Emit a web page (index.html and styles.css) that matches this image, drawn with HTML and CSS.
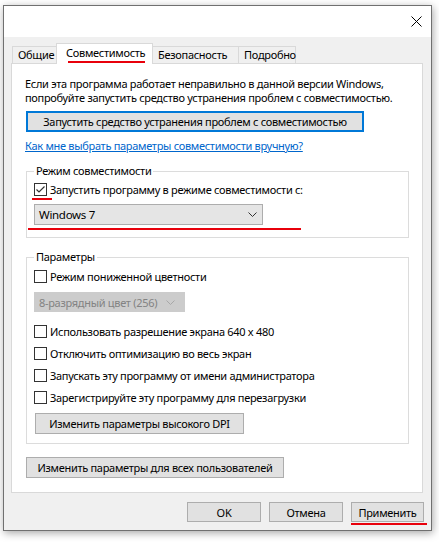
FILE: index.html
```html
<!DOCTYPE html>
<html lang="ru">
<head>
<meta charset="utf-8">
<link rel="stylesheet" href="styles.css">
</head>
<body>
<div class="window">
  <div class="titlebar">
    <svg class="close" width="11" height="11" viewBox="0 0 11 11"><path d="M0.5 0.5 L10.5 10.5 M10.5 0.5 L0.5 10.5" stroke="#000" stroke-width="1" fill="none"/></svg>
  </div>
  <div class="content">
    <div class="tabs">
      <div class="tab t1">Общие</div>
      <div class="tab active"><span class="mark">Совместимость</span></div>
      <div class="tab t3">Безопасность</div>
      <div class="tab t4">Подробно</div>
    </div>
    <div class="panel">
      <p class="intro">Если эта программа работает неправильно в данной версии Windows,<br>попробуйте запустить средство устранения проблем с совместимостью.</p>
      <div class="btn btn-default wide">Запустить средство устранения проблем с совместимостью</div>
      <a class="link">Как мне выбрать параметры совместимости вручную?</a>
      <fieldset class="group g1">
        <legend>Режим совместимости</legend>
        <label class="check"><span class="box checked mark-box"><svg width="11" height="11" viewBox="0 0 11 11"><path d="M1.5 5.5 L4 8 L9.5 2.5" stroke="#333" stroke-width="1.2" fill="none"/></svg></span>Запустить программу в режиме совместимости с:</label>
        <div class="combo mark-combo"><span>Windows 7</span><svg width="9" height="5" viewBox="0 0 9 5"><path d="M0.5 0.5 L4.5 4.5 L8.5 0.5" stroke="#333" stroke-width="1" fill="none"/></svg></div>
      </fieldset>
      <fieldset class="group g2">
        <legend>Параметры</legend>
        <label class="check"><span class="box"></span>Режим пониженной цветности</label>
        <div class="combo disabled"><span>8-разрядный цвет (256)</span><svg width="9" height="5" viewBox="0 0 9 5"><path d="M0.5 0.5 L4.5 4.5 L8.5 0.5" stroke="#a8a8a8" stroke-width="1" fill="none"/></svg></div>
        <div class="checks">
          <label class="check"><span class="box"></span>Использовать разрешение экрана 640 x 480</label>
          <label class="check"><span class="box"></span>Отключить оптимизацию во весь экран</label>
          <label class="check"><span class="box"></span>Запускать эту программу от имени администратора</label>
          <label class="check"><span class="box"></span>Зарегистрируйте эту программу для перезагрузки</label>
        </div>
        <div class="btn dpi">Изменить параметры высокого DPI</div>
      </fieldset>
      <div class="btn all">Изменить параметры для всех пользователей</div>
    </div>
    <div class="footer">
      <div class="btn foot">OK</div>
      <div class="btn foot">Отмена</div>
      <div class="btn foot mark-apply">Применить</div>
    </div>
  </div>
</div>
</body>
</html>
```

FILE: styles.css
```css
* { box-sizing: border-box; }
html, body { margin: 0; padding: 0; background: #fff; }
body {
  font-family: "Noto Sans", "Open Sans", sans-serif;
  font-size: 11px;
  letter-spacing: -0.3px;
  color: #000;
  width: 439px;
  height: 542px;
  overflow: hidden;
}
.window {
  margin: 5px 0 0 3px;
  width: 429px;
  height: 526px;
  border: 1px solid #707070;
  box-shadow: 1px 2px 8px rgba(0,0,0,0.35);
  display: flex;
  flex-direction: column;
}
.titlebar {
  height: 31px;
  background: #fff;
  display: flex;
  justify-content: flex-end;
  align-items: center;
  padding-right: 9px;
}
.close { display: block; }
.content {
  flex: 1;
  background: #f0f0f0;
  padding: 6px 8px 0 7px;
  display: flex;
  flex-direction: column;
}
.tabs {
  display: flex;
  align-items: flex-end;
  padding-left: 1px;
  height: 20px;
  position: relative;
  z-index: 2;
}
.tab {
  height: 17px;
  line-height: 16px;
  border: 1px solid #d9d9d9;
  border-bottom: none;
  background: #f0f0f0;
  padding: 0 5px;
  margin-right: -1px;
  white-space: nowrap;
}
.t1 { width: 46px; padding-left: 5px; }
.t3 { width: 88px; padding-left: 6px; }
.t4 { width: 58px; padding-left: 5px; }
.tab.active {
  width: 97px;
  height: 21px;
  margin: 0 -2px 0 -1px;
  background: #fff;
  padding: 1px 7px 0 9px;
  line-height: 16px;
  position: relative;
  z-index: 3;
  margin-bottom: -1px;
}
.mark { position: relative; }
.mark::after {
  content: "";
  position: absolute;
  left: 2px;
  right: 0;
  bottom: -3px;
  height: 2px;
  background: #e8000b;
}
.panel {
  background: #fff;
  border: 1px solid #d9d9d9;
  height: 430px;
  padding: 13px 13px 0 13px;
  display: flex;
  flex-direction: column;
  align-items: flex-start;
  position: relative;
  z-index: 1;
}
.intro {
  margin: 0;
  line-height: 14px;
  white-space: nowrap;
}
.btn {
  background: #e1e1e1;
  border: 1px solid #adadad;
  height: 21px;
  display: flex;
  align-items: center;
  justify-content: center;
  white-space: nowrap;
}
.btn-default { border: 2px solid #0078d7; }
.wide { margin-top: 6px; width: 338px; margin-left: 1px; }
.link {
  margin-top: 7px;
  color: #0066cc;
  text-decoration: underline;
  line-height: 13px;
  cursor: pointer;
}
.group {
  margin: 12px 0 0 1px;
  width: 383px;
  border: 1px solid #dcdcdc;
  padding: 0 7px;
  min-width: 0;
}
.group legend {
  padding: 0 2px;
  margin-left: 0;
  line-height: 14px;
}
.g1 { padding-bottom: 12px; }
.g2 { margin-top: 12px; padding-bottom: 9px; }
.check {
  display: flex;
  align-items: center;
  height: 14px;
  white-space: nowrap;
}
.box {
  width: 13px;
  height: 13px;
  border: 1px solid #333;
  background: #fff;
  margin-right: 3px;
  flex: none;
  display: flex;
  align-items: center;
  justify-content: center;
  position: relative;
}
.box svg { display: block; }
.g1 .check { margin-top: 4px; }
.g2 > .check { margin-top: 5px; }
.mark-box::after {
  content: "";
  position: absolute;
  left: -3px;
  width: 20px;
  bottom: -5px;
  height: 2px;
  background: #e8000b;
}
.combo {
  margin-top: 8px;
  width: 229px;
  height: 21px;
  background: #e5e5e5;
  border: 1px solid #adadad;
  display: flex;
  align-items: center;
  justify-content: space-between;
  padding: 0 5px 0 4px;
  position: relative;
}
.combo span { font-size: 11.5px; }
.combo svg { display: block; }
.mark-combo::after {
  content: "";
  position: absolute;
  left: -7px;
  width: 273px;
  bottom: -6px;
  height: 2px;
  background: #e8000b;
}
.combo.disabled {
  margin-top: 9px;
  width: 151px;
  height: 20px;
  background: #cccccc;
  border-color: #cccccc;
  color: #838383;
  padding-right: 9px;
}
.combo.disabled span { font-size: 11px; }
.checks {
  display: flex;
  flex-direction: column;
  gap: 8px;
  margin-top: 12px;
}
.dpi {
  margin-top: 9px;
  width: 209px;
  margin-left: 1px;
}
.all {
  margin-top: 13px;
  width: 258px;
  margin-left: 1px;
}
.footer {
  display: flex;
  justify-content: flex-end;
  gap: 8px;
  margin-top: 9px;
  margin-right: -1px;
}
.foot {
  width: 74px;
  height: 20px;
  position: relative;
}
.foot:last-child { width: 73px; }
.mark-apply::after {
  content: "";
  position: absolute;
  left: -1px;
  right: -4px;
  bottom: -4px;
  height: 2px;
  background: #e8000b;
}
```
